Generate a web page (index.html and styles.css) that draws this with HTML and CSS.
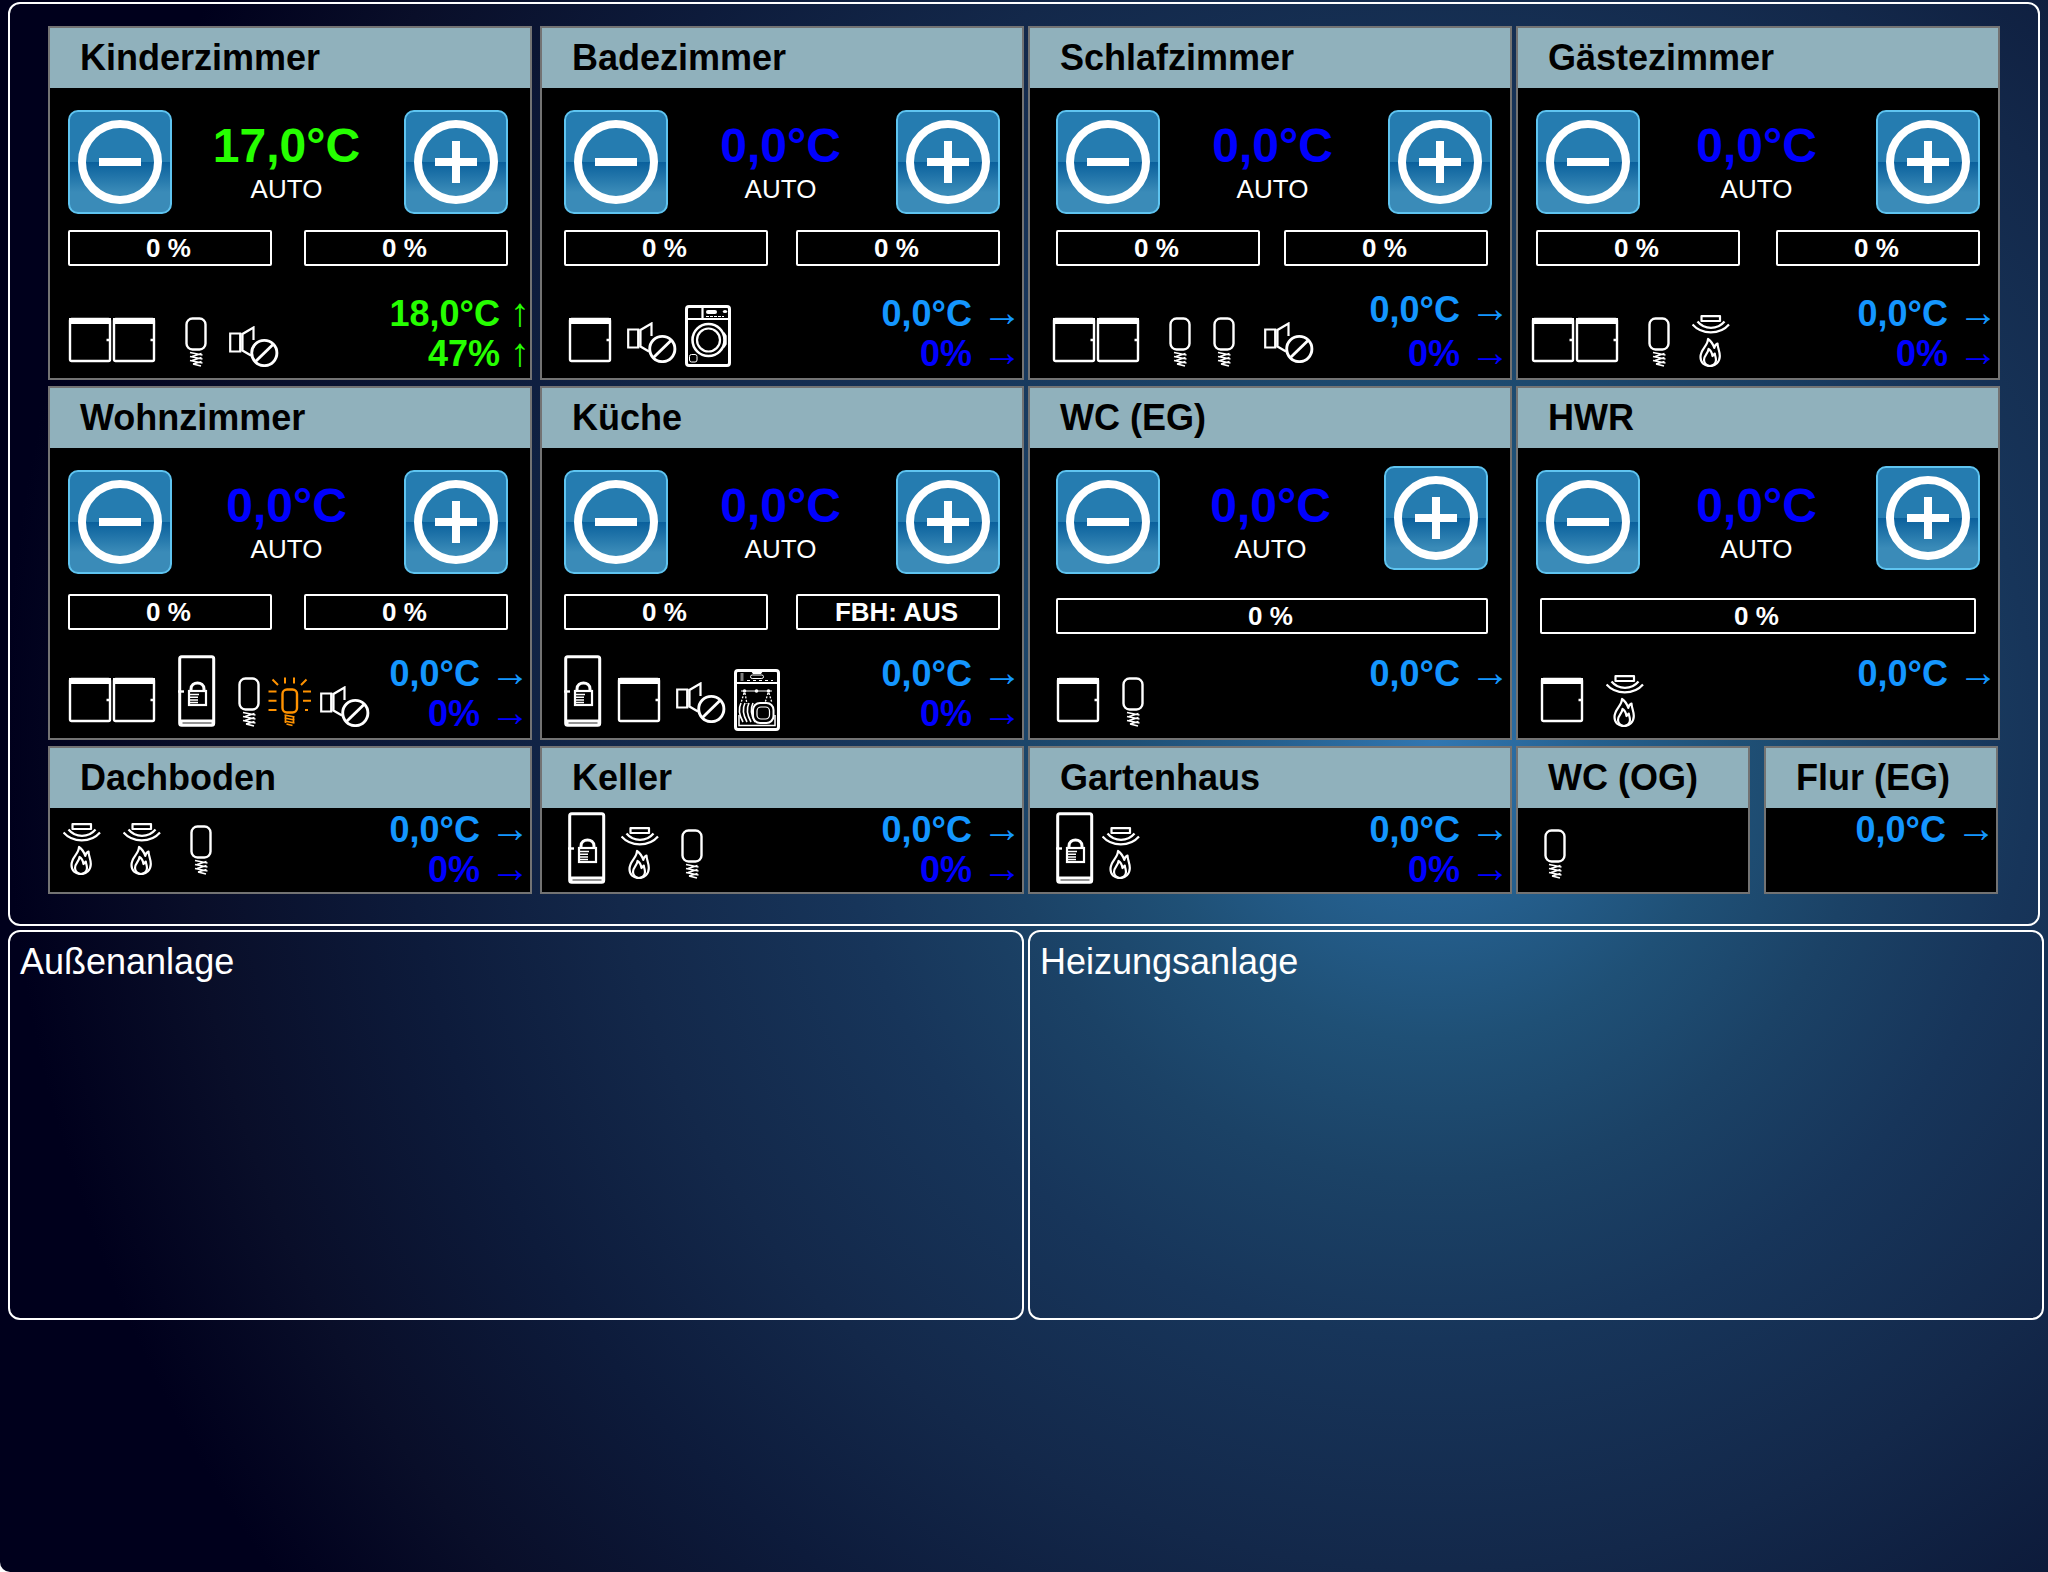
FILE: index.html
```html
<!DOCTYPE html>
<html lang="de">
<head>
    <meta charset="UTF-8">
    <meta name="viewport" content="width=device-width, initial-scale=1.0">
    <title>Haussteuerung</title>
    <link rel="stylesheet" href="styles.css">
</head>
<body>

<!-- Icons -->
<svg class="sprite" aria-hidden="true">
    <symbol id="window" viewBox="0 0 44 50">
        <rect x="2" y="2" width="40" height="42" rx="1.5" fill="none" stroke="currentColor" stroke-width="2.4"/>
        <path d="M1 1h42v6H1z" fill="currentColor"/>
        <path d="M38.500 23h4" stroke="currentColor" stroke-width="2.500"/>
    </symbol>
    <symbol id="bulb" viewBox="0 0 22 50">
        <rect x="1.500" y="1.500" width="19" height="31" rx="6" fill="none" stroke="currentColor" stroke-width="2.400"/>
        <path d="M5 35.500l12.500 2.500M5 39.500l12.500 2.500M5 43.500l12.500 2.500M8 47l8 2M16.500 36.500L7 39.500M16.500 40.500L7 43.500M16.500 44.500L8 47" fill="none" stroke="currentColor" stroke-width="1.600"/>
    </symbol>
    <symbol id="bulb-on" viewBox="0 0 44 50">
        <rect x="14.500" y="12.500" width="14.500" height="23" rx="4.500" fill="none" stroke="currentColor" stroke-width="2.400"/>
        <path d="M16.500 38l10 2M16.500 41l10 2M16.500 44l10 2M18.500 47l6 1.500M17.500 38v8M25.500 39v7" fill="none" stroke="currentColor" stroke-width="1.700"/>
        <path d="M.5 14.500h8M.5 23.700h8M.5 33h8M35 14.500h8M35 23.700h8M37 33h3M4.500 2.500l5.500 5.500M38.500 2.500L33 8M17 .5v6M26 .5v6" fill="none" stroke="currentColor" stroke-width="2"/>
    </symbol>
    <symbol id="speaker" viewBox="0 0 50 41">
        <path d="M1.200 7.500h10v18h-10zM24.500 14V1.500L13.500 8v16.500l8.500 5" fill="none" stroke="currentColor" stroke-width="2.200"/>
        <circle cx="35.300" cy="27" r="12.600" fill="none" stroke="currentColor" stroke-width="2.900"/>
        <path d="M26.500 35.500l17.500-17" stroke="currentColor" stroke-width="2.900"/>
    </symbol>
    <symbol id="washer" viewBox="0 0 46 62">
        <g fill="none" stroke="currentColor">
            <rect x="1.500" y="1.500" width="43" height="59" rx="2.500" stroke-width="3"/>
            <path d="M1 14h44M17.500 1v13" stroke-width="2.200"/>
            <path d="M21 11.500h18" stroke-width="1" stroke-dasharray="3 1"/>
            <circle cx="23.500" cy="35" r="16" stroke-width="2.600"/>
            <circle cx="23.500" cy="35" r="11.500" stroke-width="2.200"/>
            <path d="M38.500 28l2 3v8l-2 3" stroke-width="2.400"/>
            <rect x="4.500" y="49.500" width="7.500" height="7.500" rx="2" stroke-width="1"/>
        </g>
        <rect x="21" y="5" width="11" height="4" rx="2" fill="currentColor"/>
        <ellipse cx="40" cy="6.500" rx="2.200" ry="1.500" fill="currentColor"/>
    </symbol>
    <symbol id="dishwasher" viewBox="0 0 46 62">
        <g fill="none" stroke="currentColor">
            <rect x="1.500" y="1.500" width="43" height="59" rx="2.500" stroke-width="3"/>
            <path d="M1 14h44" stroke-width="2.200"/>
            <rect x="16.500" y="6" width="13" height="3.500" rx="1.700"/>
            <path d="M8 4.500v7" stroke-width="3" stroke-dasharray="1 1"/>
            <path d="M13 11.500h26" stroke-dasharray="3 3"/>
            <path d="M7 22h31"/>
            <path d="M10 24l-3 10M11 24l2 11M34 24l-3 10M35 24l3 10" stroke-width="1.300" stroke-dasharray="2 1.500"/>
            <path d="M7 34c-3 6-2 12 2 19M11 34c-3 6-2 12 2 19M15 34c-3 6-2 12 2 19M19 34c-3 6-2 12 2 19" stroke-width="1.600"/>
            <rect x="19" y="34" width="20.500" height="20" rx="7" fill="#000" stroke-width="2"/>
            <rect x="23" y="38" width="12.500" height="12" rx="4" stroke-width="1.200"/>
            <path d="M5 46v10.500h36V46" stroke-width="1.500"/>
        </g>
        <path d="M17 2h12l-2 3h-8z" fill="currentColor"/>
        <g fill="currentColor"><circle cx="10.500" cy="22" r="1.800"/><circle cx="22.500" cy="22" r="1.800"/><circle cx="34.500" cy="22" r="1.800"/></g>
    </symbol>
    <symbol id="door" viewBox="0 0 38 72">
        <rect x="1.700" y="1.700" width="34" height="68.500" rx="2" fill="none" stroke="currentColor" stroke-width="3"/>
        <path d="M2 64.500h34v6H2z" fill="currentColor"/>
        <path d="M4.500 68h29" stroke="#8a8a8a" stroke-width="1.800"/>
        <path d="M0 36.500h6" stroke="currentColor" stroke-width="2.400"/>
        <rect x="11" y="36" width="17" height="14" fill="none" stroke="currentColor" stroke-width="2.200"/>
        <path d="M13 36v-2c0-8 13-8 13 0v2" fill="none" stroke="currentColor" stroke-width="3"/>
        <path d="M12 39.500h9M12 42.300h8M12 45h8M12 47.500h8" stroke="currentColor" stroke-width="1.400"/>
    </symbol>
    <symbol id="smoke" viewBox="0 0 38 52">
        <g fill="none" stroke="currentColor" stroke-width="2.200" stroke-linejoin="round">
            <rect x="9.500" y="1.200" width="18.500" height="4.800"/>
            <path d="M5.500 6.500c7 8.500 20 8.500 27 0M.5 9.500c9 10.500 27.500 10.500 36.500 0"/>
            <path d="M16 24c0 7-7.500 10-7.500 18 0 6 4 9 9.500 9s9.800-4 9.800-10c0-5-2.200-8-2.300-12.500-2 1-3 2.500-3.200 4.500C21 29 19 26 16 24z"/>
            <path d="M16.500 34c-.5 5-4.500 6-4.500 11 0 3.500 3 6 6 6s6-2.500 6-6c0-2.500-1-4-1.200-6.500l-2.300 2.500c-.5-3-1.500-5.500-4-7z"/>
        </g>
    </symbol>
    <symbol id="minus" viewBox="0 0 84 84">
        <circle cx="42" cy="42" r="38" fill="none" stroke="currentColor" stroke-width="8"/>
        <path d="M21 42h42" stroke="currentColor" stroke-width="8"/>
    </symbol>
    <symbol id="plus" viewBox="0 0 84 84">
        <circle cx="42" cy="42" r="38" fill="none" stroke="currentColor" stroke-width="8"/>
        <path d="M21 42h42M42 21v42" stroke="currentColor" stroke-width="8"/>
    </symbol>
</svg>

<main class="page">
    <section class="panel panel-rooms">

        <!-- Obergeschoss -->
        <div class="room-row">
            <article class="room">
                <h2 class="room-title">Kinderzimmer</h2>
                <div class="room-body">
                    <div class="controls">
                        <button class="step" type="button" aria-label="Kälter"><svg><use href="#minus"/></svg></button>
                        <div class="target"><div class="target-temp warm">17,0°C</div><div class="target-mode">AUTO</div></div>
                        <button class="step" type="button" aria-label="Wärmer"><svg><use href="#plus"/></svg></button>
                    </div>
                    <div class="bars"><div class="bar">0 %</div><div class="bar">0 %</div></div>
                    <div class="status">
                        <div class="icons inset-s">
                            <svg class="icon window"><use href="#window"/></svg>
                            <svg class="icon window"><use href="#window"/></svg>
                            <svg class="icon bulb gap-xl"><use href="#bulb"/></svg>
                            <svg class="icon speaker gap-l"><use href="#speaker"/></svg>
                        </div>
                        <div class="readings"><div class="warm">18,0°C <span class="arrow">↑</span></div><div class="warm">47% <span class="arrow">↑</span></div></div>
                    </div>
                </div>
            </article>

            <article class="room">
                <h2 class="room-title">Badezimmer</h2>
                <div class="room-body">
                    <div class="controls">
                        <button class="step" type="button" aria-label="Kälter"><svg><use href="#minus"/></svg></button>
                        <div class="target"><div class="target-temp">0,0°C</div><div class="target-mode">AUTO</div></div>
                        <button class="step" type="button" aria-label="Wärmer"><svg><use href="#plus"/></svg></button>
                    </div>
                    <div class="bars"><div class="bar">0 %</div><div class="bar">0 %</div></div>
                    <div class="status">
                        <div class="icons inset-l">
                            <svg class="icon window"><use href="#window"/></svg>
                            <svg class="icon speaker lifted gap-m"><use href="#speaker"/></svg>
                            <svg class="icon washer gap-s"><use href="#washer"/></svg>
                        </div>
                        <div class="readings"><div class="temp">0,0°C <span class="arrow">→</span></div><div class="humidity">0% <span class="arrow">→</span></div></div>
                    </div>
                </div>
            </article>

            <article class="room">
                <h2 class="room-title">Schlafzimmer</h2>
                <div class="room-body">
                    <div class="controls">
                        <button class="step" type="button" aria-label="Kälter"><svg><use href="#minus"/></svg></button>
                        <div class="target"><div class="target-temp">0,0°C</div><div class="target-mode">AUTO</div></div>
                        <button class="step" type="button" aria-label="Wärmer"><svg><use href="#plus"/></svg></button>
                    </div>
                    <div class="bars"><div class="bar">0 %</div><div class="bar">0 %</div></div>
                    <div class="status">
                        <div class="icons inset-m">
                            <svg class="icon window"><use href="#window"/></svg>
                            <svg class="icon window"><use href="#window"/></svg>
                            <svg class="icon bulb gap-xl"><use href="#bulb"/></svg>
                            <svg class="icon bulb gap-l"><use href="#bulb"/></svg>
                            <svg class="icon speaker lifted gap-xl"><use href="#speaker"/></svg>
                        </div>
                        <div class="readings loose"><div class="temp">0,0°C <span class="arrow">→</span></div><div class="humidity">0% <span class="arrow">→</span></div></div>
                    </div>
                </div>
            </article>

            <article class="room">
                <h2 class="room-title">Gästezimmer</h2>
                <div class="room-body">
                    <div class="controls">
                        <button class="step" type="button" aria-label="Kälter"><svg><use href="#minus"/></svg></button>
                        <div class="target"><div class="target-temp">0,0°C</div><div class="target-mode">AUTO</div></div>
                        <button class="step" type="button" aria-label="Wärmer"><svg><use href="#plus"/></svg></button>
                    </div>
                    <div class="bars"><div class="bar">0 %</div><div class="bar">0 %</div></div>
                    <div class="status">
                        <div class="icons inset-xs">
                            <svg class="icon window"><use href="#window"/></svg>
                            <svg class="icon window"><use href="#window"/></svg>
                            <svg class="icon bulb gap-xl"><use href="#bulb"/></svg>
                            <svg class="icon smoke gap-l"><use href="#smoke"/></svg>
                        </div>
                        <div class="readings"><div class="temp">0,0°C <span class="arrow">→</span></div><div class="humidity">0% <span class="arrow">→</span></div></div>
                    </div>
                </div>
            </article>
        </div>

        <!-- Erdgeschoss -->
        <div class="room-row ground">
            <article class="room">
                <h2 class="room-title">Wohnzimmer</h2>
                <div class="room-body">
                    <div class="controls">
                        <button class="step" type="button" aria-label="Kälter"><svg><use href="#minus"/></svg></button>
                        <div class="target"><div class="target-temp">0,0°C</div><div class="target-mode">AUTO</div></div>
                        <button class="step" type="button" aria-label="Wärmer"><svg><use href="#plus"/></svg></button>
                    </div>
                    <div class="bars"><div class="bar">0 %</div><div class="bar">0 %</div></div>
                    <div class="status">
                        <div class="icons inset-s">
                            <svg class="icon window"><use href="#window"/></svg>
                            <svg class="icon window"><use href="#window"/></svg>
                            <svg class="icon door gap-l"><use href="#door"/></svg>
                            <svg class="icon bulb gap-l"><use href="#bulb"/></svg>
                            <svg class="icon bulb-on gap-s"><use href="#bulb-on"/></svg>
                            <svg class="icon speaker gap-s"><use href="#speaker"/></svg>
                        </div>
                        <div class="readings"><div class="temp">0,0°C <span class="arrow">→</span></div><div class="humidity">0% <span class="arrow">→</span></div></div>
                    </div>
                </div>
            </article>

            <article class="room">
                <h2 class="room-title">Küche</h2>
                <div class="room-body">
                    <div class="controls">
                        <button class="step" type="button" aria-label="Kälter"><svg><use href="#minus"/></svg></button>
                        <div class="target"><div class="target-temp">0,0°C</div><div class="target-mode">AUTO</div></div>
                        <button class="step" type="button" aria-label="Wärmer"><svg><use href="#plus"/></svg></button>
                    </div>
                    <div class="bars"><div class="bar">0 %</div><div class="bar">FBH: AUS</div></div>
                    <div class="status">
                        <div class="icons inset-m">
                            <svg class="icon door"><use href="#door"/></svg>
                            <svg class="icon window gap-m"><use href="#window"/></svg>
                            <svg class="icon speaker lifted gap-m"><use href="#speaker"/></svg>
                            <svg class="icon dishwasher gap-s"><use href="#dishwasher"/></svg>
                        </div>
                        <div class="readings"><div class="temp">0,0°C <span class="arrow">→</span></div><div class="humidity">0% <span class="arrow">→</span></div></div>
                    </div>
                </div>
            </article>

            <article class="room">
                <h2 class="room-title">WC (EG)</h2>
                <div class="room-body">
                    <div class="controls">
                        <button class="step" type="button" aria-label="Kälter"><svg><use href="#minus"/></svg></button>
                        <div class="target"><div class="target-temp">0,0°C</div><div class="target-mode">AUTO</div></div>
                        <button class="step raised" type="button" aria-label="Wärmer"><svg><use href="#plus"/></svg></button>
                    </div>
                    <div class="bars bars-single"><div class="bar">0 %</div></div>
                    <div class="status">
                        <div class="icons inset-l">
                            <svg class="icon window"><use href="#window"/></svg>
                            <svg class="icon bulb gap-l"><use href="#bulb"/></svg>
                        </div>
                        <div class="readings"><div class="temp">0,0°C <span class="arrow">→</span></div></div>
                    </div>
                </div>
            </article>

            <article class="room">
                <h2 class="room-title">HWR</h2>
                <div class="room-body">
                    <div class="controls">
                        <button class="step" type="button" aria-label="Kälter"><svg><use href="#minus"/></svg></button>
                        <div class="target"><div class="target-temp">0,0°C</div><div class="target-mode">AUTO</div></div>
                        <button class="step raised" type="button" aria-label="Wärmer"><svg><use href="#plus"/></svg></button>
                    </div>
                    <div class="bars bars-single"><div class="bar">0 %</div></div>
                    <div class="status">
                        <div class="icons inset-m">
                            <svg class="icon window"><use href="#window"/></svg>
                            <svg class="icon smoke gap-l"><use href="#smoke"/></svg>
                        </div>
                        <div class="readings"><div class="temp">0,0°C <span class="arrow">→</span></div></div>
                    </div>
                </div>
            </article>
        </div>

        <!-- Nebenräume -->
        <div class="room-row small">
            <article class="room">
                <h2 class="room-title">Dachboden</h2>
                <div class="room-body">
                    <div class="status">
                        <div class="icons high inset-xs">
                            <svg class="icon smoke"><use href="#smoke"/></svg>
                            <svg class="icon smoke gap-l"><use href="#smoke"/></svg>
                            <svg class="icon bulb gap-xl"><use href="#bulb"/></svg>
                        </div>
                        <div class="readings"><div class="temp">0,0°C <span class="arrow">→</span></div><div class="humidity">0% <span class="arrow">→</span></div></div>
                    </div>
                </div>
            </article>

            <article class="room">
                <h2 class="room-title">Keller</h2>
                <div class="room-body">
                    <div class="status">
                        <div class="icons inset-l">
                            <svg class="icon door"><use href="#door"/></svg>
                            <svg class="icon smoke gap-m"><use href="#smoke"/></svg>
                            <svg class="icon bulb gap-l"><use href="#bulb"/></svg>
                        </div>
                        <div class="readings"><div class="temp">0,0°C <span class="arrow">→</span></div><div class="humidity">0% <span class="arrow">→</span></div></div>
                    </div>
                </div>
            </article>

            <article class="room">
                <h2 class="room-title">Gartenhaus</h2>
                <div class="room-body">
                    <div class="status">
                        <div class="icons inset-l">
                            <svg class="icon door"><use href="#door"/></svg>
                            <svg class="icon smoke gap-s"><use href="#smoke"/></svg>
                        </div>
                        <div class="readings"><div class="temp">0,0°C <span class="arrow">→</span></div><div class="humidity">0% <span class="arrow">→</span></div></div>
                    </div>
                </div>
            </article>

            <div class="room-pair">
                <article class="room">
                    <h2 class="room-title">WC (OG)</h2>
                    <div class="room-body">
                        <div class="status">
                            <div class="icons inset-l">
                                <svg class="icon bulb"><use href="#bulb"/></svg>
                            </div>
                        </div>
                    </div>
                </article>
                <article class="room">
                    <h2 class="room-title">Flur (EG)</h2>
                    <div class="room-body">
                        <div class="status">
                            <div class="icons"></div>
                            <div class="readings"><div class="temp">0,0°C <span class="arrow">→</span></div></div>
                        </div>
                    </div>
                </article>
            </div>
        </div>
    </section>

    <div class="panel-row">
        <section class="panel panel-plant"><h2 class="panel-title">Außenanlage</h2></section>
        <section class="panel panel-plant"><h2 class="panel-title">Heizungsanlage</h2></section>
    </div>
</main>

</body>
</html>
```

FILE: styles.css
```css
:root {
    --green: #26ff00;
    --blue: #0000ff;
    --sky: #1496ff;
    --header: #90b1bc;
    --card-border: #737373;
}

* {
    box-sizing: border-box;
}

html {
    background: #ffffff;
}

body {
    margin: 0;
    font-family: "Liberation Sans", Arial, Helvetica, sans-serif;
    color: #ffffff;
}

h2 {
    margin: 0;
}

.sprite {
    display: none;
}

.page {
    min-height: 100vh;
    padding: 2px 4px 0 8px;
    border-radius: 0 0 0 10px;
    background: radial-gradient(circle at 70% 47%,
        #3177b2 0,
        #25608f 160px,
        #1f5076 300px,
        #1b4266 440px,
        #17355a 600px,
        #13284a 830px,
        #0d1b3b 1030px,
        #090e29 1250px,
        #00001c 1430px);
}

/* Rahmen */
.panel {
    border: 2px solid #ffffff;
    border-radius: 12px;
}

.panel-rooms {
    display: flex;
    flex-direction: column;
    gap: 6px;
    margin-right: 4px;
    padding: 22px 38px 30px;
}

.panel-row {
    display: flex;
    gap: 4px;
    margin-top: 4px;
}

.panel-plant {
    flex: 1;
    min-height: 390px;
    padding: 10px;
}

.panel-title {
    font-size: 36px;
    font-weight: 400;
    line-height: 40px;
}

/* Räume */
.room-row {
    display: flex;
    gap: 4px;
}

.room {
    display: flex;
    flex-direction: column;
    flex: 1 1 4px;
    min-height: 354px;
    border: 2px solid var(--card-border);
    background: #000000;
}

.room-row > .room:first-child {
    margin-right: 4px;
}

.small .room {
    min-height: 148px;
}

.room-pair {
    display: flex;
    flex: 1 1 4px;
    gap: 14px;
    padding-right: 2px;
}

.room-title {
    padding-left: 30px;
    background: var(--header);
    color: #000000;
    font-size: 36px;
    line-height: 60px;
    white-space: nowrap;
}

.room-body {
    display: flex;
    flex-direction: column;
    flex: 1;
}

/* Sollwert */
.controls {
    display: flex;
    justify-content: space-between;
    margin-top: 22px;
}

.controls,
.bars {
    padding: 0 22px;
}

.room:nth-child(1) .controls,
.room:nth-child(1) .bars {
    padding-left: 18px;
}

.room:nth-child(3) .controls,
.room:nth-child(3) .bars {
    padding-left: 26px;
}

.room:nth-child(3) .controls {
    padding-right: 18px;
}

.ground .room:nth-child(3) .controls {
    padding-right: 22px;
}

.room:nth-child(4) .controls,
.room:nth-child(4) .bars {
    padding: 0 18px;
}

.room:nth-child(4) .bars-single {
    padding: 0 22px;
}

.step {
    width: 104px;
    height: 104px;
    padding: 8px;
    border: 2px solid #5fc4f0;
    border-radius: 10px;
    background: linear-gradient(#257cb0 0, #257cb0 50%, #0a609c 50%, #3a8bb8 80%);
    color: #ffffff;
    cursor: pointer;
}

.step svg {
    display: block;
    width: 84px;
    height: 84px;
}

.step.raised {
    margin-top: -4px;
}

.target {
    padding: 8px 3px 0 0;
    text-align: center;
}

.target-temp {
    color: var(--blue);
    font-size: 48px;
    font-weight: 700;
    line-height: 56px;
}

.target-mode {
    font-size: 26px;
    line-height: 30px;
}

/* Ventilstellung */
.bars {
    display: flex;
    justify-content: space-between;
    margin-top: 16px;
}

.ground .bars {
    margin-top: 20px;
}

.ground .bars-single {
    margin-top: 24px;
}

.bar {
    width: 204px;
    padding-right: 3px;
    border: 2px solid #ffffff;
    border-radius: 2px;
    font-size: 26px;
    font-weight: 700;
    line-height: 32px;
    text-align: center;
}

.bars-single .bar {
    width: 100%;
}

/* Statuszeile */
.status {
    display: flex;
    justify-content: space-between;
    align-items: flex-end;
    margin-top: auto;
}

.icons {
    display: flex;
    align-items: flex-end;
    padding-bottom: 11px;
}

.small .icons {
    padding-bottom: 8px;
}

.small .icons.high {
    padding-bottom: 12px;
}

.inset-xs { padding-left: 13px; }
.inset-s { padding-left: 18px; }
.inset-m { padding-left: 22px; }
.inset-l { padding-left: 26px; }

.gap-s { margin-left: 8px; }
.gap-m { margin-left: 15px; }
.gap-l { margin-left: 22px; }
.gap-xl { margin-left: 29px; }

.icon {
    flex: none;
}

.icon.lifted {
    margin-bottom: 4px;
}

.window { width: 44px; height: 50px; }
.bulb { width: 22px; height: 50px; }
.bulb-on { width: 44px; height: 50px; color: #ff9200; }
.speaker { width: 50px; height: 41px; }
.washer { width: 46px; height: 62px; }
.dishwasher { width: 46px; height: 62px; margin-bottom: -4px; }
.door { width: 38px; height: 72px; }
.smoke { width: 38px; height: 52px; }

.small .bulb,
.small .smoke {
    margin-bottom: 5px;
}

.readings {
    min-height: 80px;
    margin-bottom: 4px;
    font-size: 36px;
    font-weight: 700;
    line-height: 40px;
    text-align: right;
    white-space: nowrap;
}

.small .readings {
    margin-bottom: 2px;
}

.readings.loose .temp {
    padding-bottom: 4px;
}

.arrow {
    font-size: 40px;
    line-height: 32px;
}

.temp {
    color: var(--sky);
}

.humidity {
    color: var(--blue);
}

.warm {
    color: var(--green);
}
```
